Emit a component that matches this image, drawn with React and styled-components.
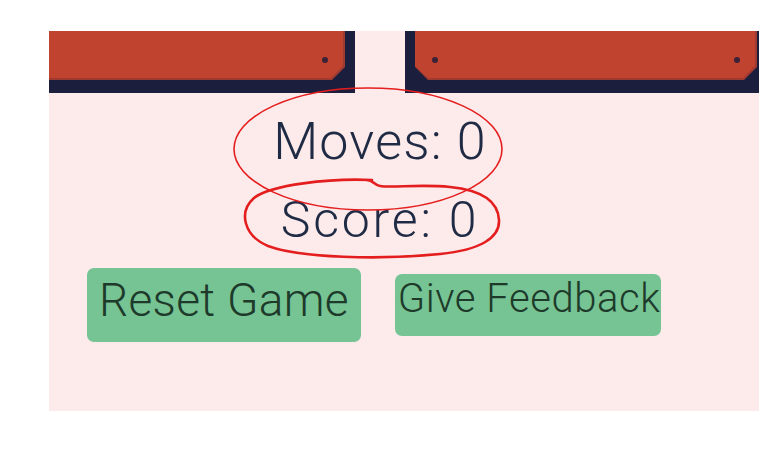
import React from "react";
import styled, { createGlobalStyle } from "styled-components";

const GlobalStyle = createGlobalStyle`
  body {
    margin: 0;
    background: #ffffff;
    font-family: Roboto, "Liberation Sans", sans-serif;
  }
`;

const Page = styled.div`
  position: relative;
  width: 777px;
  height: 459px;
  padding: 31px 0 0 49px;
  box-sizing: border-box;
`;

const Panel = styled.div`
  width: 710px;
  height: 380px;
  background: #fdeaea;
  overflow: hidden;
  display: flex;
  flex-direction: column;
`;

const Board = styled.div`
  display: flex;
  gap: 50px;
  margin-left: -56px;
  height: 62px;
  flex-shrink: 0;
`;

const TileBox = styled.svg`
  flex-shrink: 0;
  display: block;
`;

const Stats = styled.div`
  display: flex;
  flex-direction: column;
  align-items: center;
  padding-right: 48px;
  color: #1f2a44;
`;

const Stat = styled.div`
  font-size: ${(p) => p.size}px;
  font-weight: 300;
  letter-spacing: ${(p) => p.spacing}px;
  line-height: 1;
  margin-top: ${(p) => p.top}px;
`;

const Actions = styled.div`
  display: flex;
  align-items: center;
  gap: 34px;
  padding-left: 38px;
  margin-top: 23px;
`;

const Button = styled.button`
  font-family: Roboto, "Liberation Sans", sans-serif;
  font-size: ${(p) => p.size}px;
  font-weight: 300;
  letter-spacing: ${(p) => p.spacing}px;
  line-height: 1;
  color: #1d3a2a;
  background: #76c393;
  border: none;
  border-radius: 7px;
  padding: ${(p) => p.pad};
  cursor: pointer;
`;

const Marks = styled.svg`
  position: absolute;
  left: 0;
  top: 0;
  pointer-events: none;
`;

function Tile() {
  return (
    <TileBox width="362" height="62" viewBox="0 0 362 62">
      <rect width="362" height="62" fill="#1c1e3e" />
      <polygon points="10,0 352,0 352,36 339,49 23,49 10,36" fill="#9e3a30" />
      <polygon points="10,0 350,0 350,35 338,47 23,47 10,35" fill="#bf432e" />
      <circle cx="30" cy="29" r="3" fill="#3b2238" />
      <circle cx="332" cy="29" r="3" fill="#3b2238" />
    </TileBox>
  );
}

export default function App() {
  return (
    <Page>
      <GlobalStyle />
      <Panel>
        <Board>
          <Tile />
          <Tile />
        </Board>
        <Stats>
          <Stat size={52} spacing={1.2} top={23}>Moves: 0</Stat>
          <Stat size={50} spacing={2.8} top={27}>Score: 0</Stat>
        </Stats>
        <Actions>
          <Button size={46} spacing={0.3} pad="9px 12px 19px">Reset Game</Button>
          <Button size={40} spacing={0.55} pad="5px 1px 17px 3px">Give Feedback</Button>
        </Actions>
      </Panel>
      <Marks width="777" height="459" viewBox="0 0 777 459">
        <ellipse cx="368" cy="149" rx="134" ry="61" fill="none" stroke="#e41e1e" strokeWidth="1.6" />
        <path
          d="M372 180 C330 178 270 185 254 198 C238 212 244 236 268 246 C300 258 380 260 440 254 C480 250 500 238 499 220 C498 200 480 190 450 187 C420 184 392 188 380 186 C374 185 374 180 366 180"
          fill="none"
          stroke="#e41e1e"
          strokeWidth="2.6"
          strokeLinecap="round"
        />
      </Marks>
    </Page>
  );
}
